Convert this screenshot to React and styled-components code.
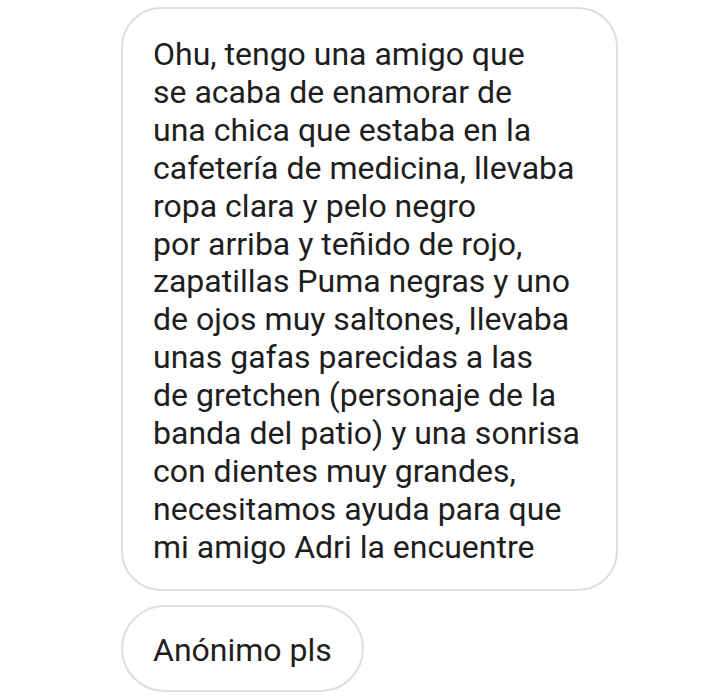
import styled, { createGlobalStyle } from 'styled-components'

const Global = createGlobalStyle`
    html, body {
        margin: 0;
        padding: 0;
        background: #fff;
    }
`

const lines = [
    "Ohu, tengo una amigo que",
    "se acaba de enamorar de",
    "una chica que estaba en la",
    "cafetería de medicina, llevaba",
    "ropa clara y pelo negro",
    "por arriba y teñido de rojo,",
    "zapatillas Puma negras y uno",
    "de ojos muy saltones, llevaba",
    "unas gafas parecidas a las",
    "de gretchen (personaje de la",
    "banda del patio) y una sonrisa",
    "con dientes muy grandes,",
    "necesitamos ayuda para que",
    "mi amigo Adri la encuentre",
]

const App = () => {
    return (
        <Page>
            <Global />
            <Bubble>
                {lines.map((l, i) => <Line key={i}>{l}</Line>)}
            </Bubble>
            <Pill>Anónimo pls</Pill>
        </Page>
    )
}

export default App

const Page = styled.div`
    width: 720px;
    height: 697px;
    box-sizing: border-box;
    padding: 7px 0 0 121px;
    display: flex;
    flex-direction: column;
    align-items: flex-start;
    gap: 14px;
    font-family: Roboto, "Noto Sans", sans-serif;
    color: #1e1e1e;
`

const Bubble = styled.div`
    box-sizing: border-box;
    width: 497px;
    height: 584px;
    padding: 27px 0 0 30px;
    border: 2px solid #dedede;
    border-radius: 40px;
    font-size: 32px;
    line-height: 37.9px;
`

const Line = styled.div`
    white-space: nowrap;
`

const Pill = styled.div`
    box-sizing: border-box;
    height: 87px;
    padding: 2px 30px 0;
    display: flex;
    align-items: center;
    border: 2px solid #dedede;
    border-radius: 44px;
    font-size: 32px;
`
